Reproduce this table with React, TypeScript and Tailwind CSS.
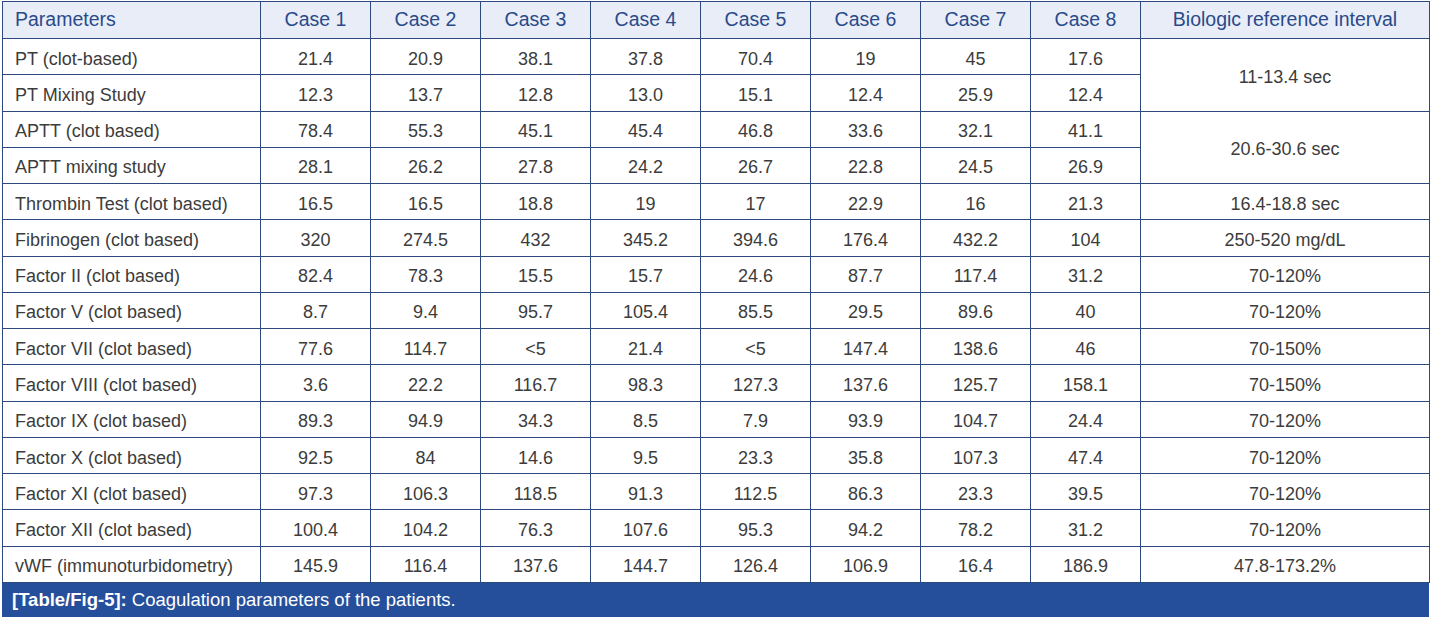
const cases = ['Case 1', 'Case 2', 'Case 3', 'Case 4', 'Case 5', 'Case 6', 'Case 7', 'Case 8']

// [parameter, values, reference interval (null = covered by rowspan), rowspan]
const rows: [string, string[], string | null, number][] = [
  ['PT (clot-based)', ['21.4', '20.9', '38.1', '37.8', '70.4', '19', '45', '17.6'], '11-13.4 sec', 2],
  ['PT Mixing Study', ['12.3', '13.7', '12.8', '13.0', '15.1', '12.4', '25.9', '12.4'], null, 1],
  ['APTT (clot based)', ['78.4', '55.3', '45.1', '45.4', '46.8', '33.6', '32.1', '41.1'], '20.6-30.6 sec', 2],
  ['APTT mixing study', ['28.1', '26.2', '27.8', '24.2', '26.7', '22.8', '24.5', '26.9'], null, 1],
  ['Thrombin Test (clot based)', ['16.5', '16.5', '18.8', '19', '17', '22.9', '16', '21.3'], '16.4-18.8 sec', 1],
  ['Fibrinogen (clot based)', ['320', '274.5', '432', '345.2', '394.6', '176.4', '432.2', '104'], '250-520 mg/dL', 1],
  ['Factor II (clot based)', ['82.4', '78.3', '15.5', '15.7', '24.6', '87.7', '117.4', '31.2'], '70-120%', 1],
  ['Factor V (clot based)', ['8.7', '9.4', '95.7', '105.4', '85.5', '29.5', '89.6', '40'], '70-120%', 1],
  ['Factor VII (clot based)', ['77.6', '114.7', '<5', '21.4', '<5', '147.4', '138.6', '46'], '70-150%', 1],
  ['Factor VIII (clot based)', ['3.6', '22.2', '116.7', '98.3', '127.3', '137.6', '125.7', '158.1'], '70-150%', 1],
  ['Factor IX (clot based)', ['89.3', '94.9', '34.3', '8.5', '7.9', '93.9', '104.7', '24.4'], '70-120%', 1],
  ['Factor X (clot based)', ['92.5', '84', '14.6', '9.5', '23.3', '35.8', '107.3', '47.4'], '70-120%', 1],
  ['Factor XI (clot based)', ['97.3', '106.3', '118.5', '91.3', '112.5', '86.3', '23.3', '39.5'], '70-120%', 1],
  ['Factor XII (clot based)', ['100.4', '104.2', '76.3', '107.6', '95.3', '94.2', '78.2', '31.2'], '70-120%', 1],
  ['vWF (immunoturbidometry)', ['145.9', '116.4', '137.6', '144.7', '126.4', '106.9', '16.4', '186.9'], '47.8-173.2%', 1],
]

export default function App() {
  return (
    <div className="w-[1432px] h-[619px] bg-white pl-[2px] pt-[1px] font-['Liberation_Sans',Arial,sans-serif] text-[18px] text-[#3c3c3c]">
      <table className="w-[1427px] table-fixed border-collapse">
        <colgroup>
          <col className="w-[258px]" />
          {cases.map((c) => (
            <col key={c} className="w-[110px]" />
          ))}
          <col className="w-[289px]" />
        </colgroup>
        <thead>
          <tr className="h-[37px] bg-[#e9edf7] text-[#2a4a8a] text-[19.5px]">
            <th className="border border-[#2c4a7e] px-3 text-left font-normal">Parameters</th>
            {cases.map((c) => (
              <th key={c} className="border border-[#2c4a7e] text-center font-normal">{c}</th>
            ))}
            <th className="border border-[#2c4a7e] text-center font-normal">Biologic reference interval</th>
          </tr>
        </thead>
        <tbody>
          {rows.map(([param, values, ref, span]) => (
            <tr key={param} className="h-[36.27px]">
              <td className="border border-[#2c4a7e] px-3 pt-[5px] pb-0 text-left">{param}</td>
              {values.map((v, i) => (
                <td key={i} className="border border-[#2c4a7e] pt-[5px] pb-0 text-center">{v}</td>
              ))}
              {ref !== null && (
                <td rowSpan={span} className="border border-[#2c4a7e] pt-[5px] pb-0 text-center">{ref}</td>
              )}
            </tr>
          ))}
        </tbody>
      </table>
      <div className="w-[1427px] h-[34px] bg-[#264f9b] text-white text-[18.5px] flex items-center px-[10px]">
        <span className="font-bold">[Table/Fig-5]:</span>
        <span className="ml-[5px]">Coagulation parameters of the patients.</span>
      </div>
    </div>
  )
}
